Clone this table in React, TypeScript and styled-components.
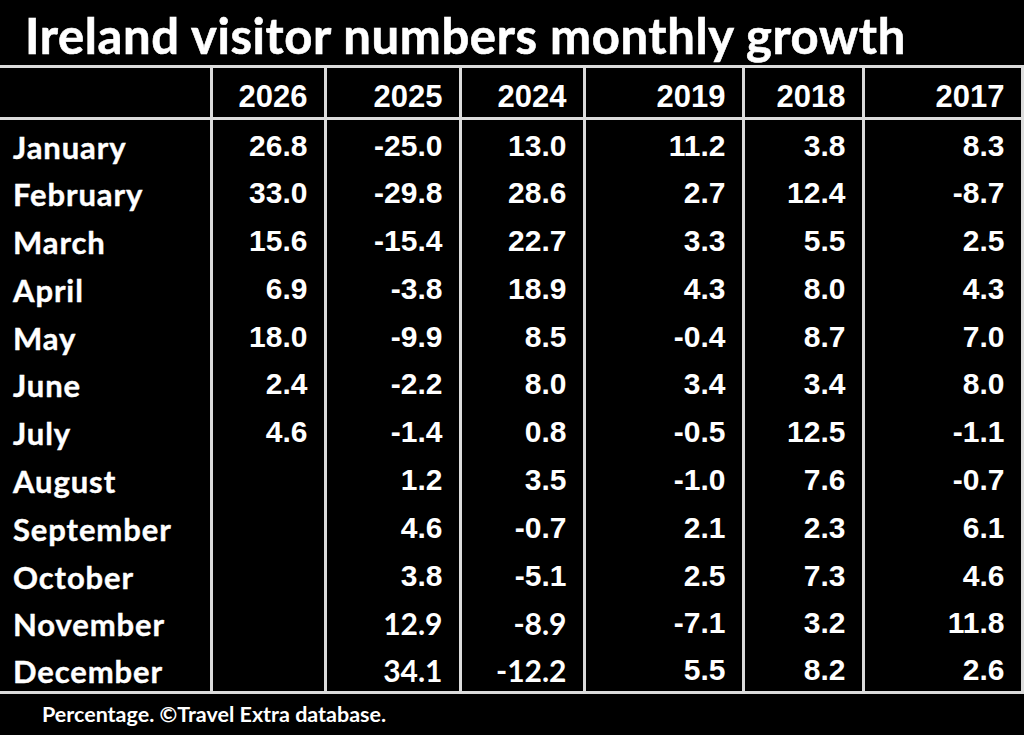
import React from 'react';
import styled, {createGlobalStyle} from 'styled-components';

const GlobalStyle = createGlobalStyle`
  html, body {
    margin: 0;
    padding: 0;
    background: #000;
  }
`;

const years = ['2026', '2025', '2024', '2019', '2018', '2017'];
const widths = [211, 114, 135, 124, 159, 120, 159];

// c = cells set in the rounder face, as in the source sheet
const rows: {month: string; values: string[]; c?: number[]}[] = [
    {month: 'January', values: ['26.8', '-25.0', '13.0', '11.2', '3.8', '8.3']},
    {month: 'February', values: ['33.0', '-29.8', '28.6', '2.7', '12.4', '-8.7']},
    {month: 'March', values: ['15.6', '-15.4', '22.7', '3.3', '5.5', '2.5']},
    {month: 'April', values: ['6.9', '-3.8', '18.9', '4.3', '8.0', '4.3']},
    {month: 'May', values: ['18.0', '-9.9', '8.5', '-0.4', '8.7', '7.0']},
    {month: 'June', values: ['2.4', '-2.2', '8.0', '3.4', '3.4', '8.0']},
    {month: 'July', values: ['4.6', '-1.4', '0.8', '-0.5', '12.5', '-1.1']},
    {month: 'August', values: ['', '1.2', '3.5', '-1.0', '7.6', '-0.7']},
    {month: 'September', values: ['', '4.6', '-0.7', '2.1', '2.3', '6.1']},
    {month: 'October', values: ['', '3.8', '-5.1', '2.5', '7.3', '4.6']},
    {month: 'November', values: ['', '12.9', '-8.9', '-7.1', '3.2', '11.8'], c: [1, 2]},
    {month: 'December', values: ['', '34.1', '-12.2', '5.5', '8.2', '2.6'], c: [1, 2]},
];

export default function App() {
    return (
        <Page>
            <GlobalStyle/>
            <Title>Ireland visitor numbers monthly growth</Title>
            <Table>
                <colgroup>
                    {widths.map((w, i) => <col key={i} style={{width: w}}/>)}
                </colgroup>
                <thead>
                <HeadRow>
                    <MonthCell/>
                    {years.map(y => <YearCell key={y}>{y}</YearCell>)}
                </HeadRow>
                </thead>
                <tbody>
                {rows.map(r => (
                    <BodyRow key={r.month}>
                        <MonthCell>{r.month}</MonthCell>
                        {r.values.map((v, i) => (
                            <ValueCell key={i} $round={!!r.c?.includes(i)}>{v}</ValueCell>
                        ))}
                    </BodyRow>
                ))}
                </tbody>
            </Table>
            <Footer>Percentage. ©Travel Extra database.</Footer>
        </Page>
    );
}

const Page = styled.div`
  width: 1024px;
  height: 735px;
  background: #000;
  color: #fff;
  overflow: hidden;
  font-family: Lato, "Noto Sans", sans-serif;
`;

const Title = styled.h1`
  margin: 0;
  height: 65px;
  padding-left: 25px;
  font-family: Lato, "Noto Sans", sans-serif;
  font-weight: 700;
  font-size: 49px;
  line-height: 70px;
  white-space: nowrap;
  letter-spacing: 0.6px;
  -webkit-text-stroke: 0.6px #fff;
`;

const Table = styled.table`
  width: 1023px;
  table-layout: fixed;
  border-collapse: collapse;
  border-top: 3px solid #dcdcdc;
  border-bottom: 3px solid #dcdcdc;
`;

const HeadRow = styled.tr`
  height: 52px;
  border-bottom: 3px solid #dcdcdc;
`;

const BodyRow = styled.tr`
  height: 47.8px;
`;

const MonthCell = styled.td`
  padding: 8px 0 0 13px;
  font-family: Lato, "Noto Sans", sans-serif;
  font-weight: 700;
  font-size: 31px;
  letter-spacing: 0.9px;
  white-space: nowrap;
  vertical-align: middle;
  -webkit-text-stroke: 0.4px #fff;
`;

const YearCell = styled.th`
  padding: 9px 16px 0 0;
  text-align: right;
  font-family: "Liberation Sans", Arial, sans-serif;
  font-weight: 700;
  font-size: 31px;
  border-left: 3px solid #dcdcdc;
  &:last-child {
    border-right: 3px solid #dcdcdc;
  }
`;

const ValueCell = styled.td<{ $round: boolean }>`
  padding: 6px 16px 0 0;
  text-align: right;
  font-family: ${p => p.$round ? 'Lato, "Noto Sans", sans-serif' : '"Liberation Sans", Arial, sans-serif'};
  font-weight: 700;
  font-size: 30px;
  border-left: 3px solid #dcdcdc;
  white-space: nowrap;
  &:last-child {
    border-right: 3px solid #dcdcdc;
  }
`;

const Footer = styled.div`
  padding-left: 42px;
  font-family: Lato, "Noto Sans", sans-serif;
  font-weight: 700;
  font-size: 21.5px;
  line-height: 40px;
`;
